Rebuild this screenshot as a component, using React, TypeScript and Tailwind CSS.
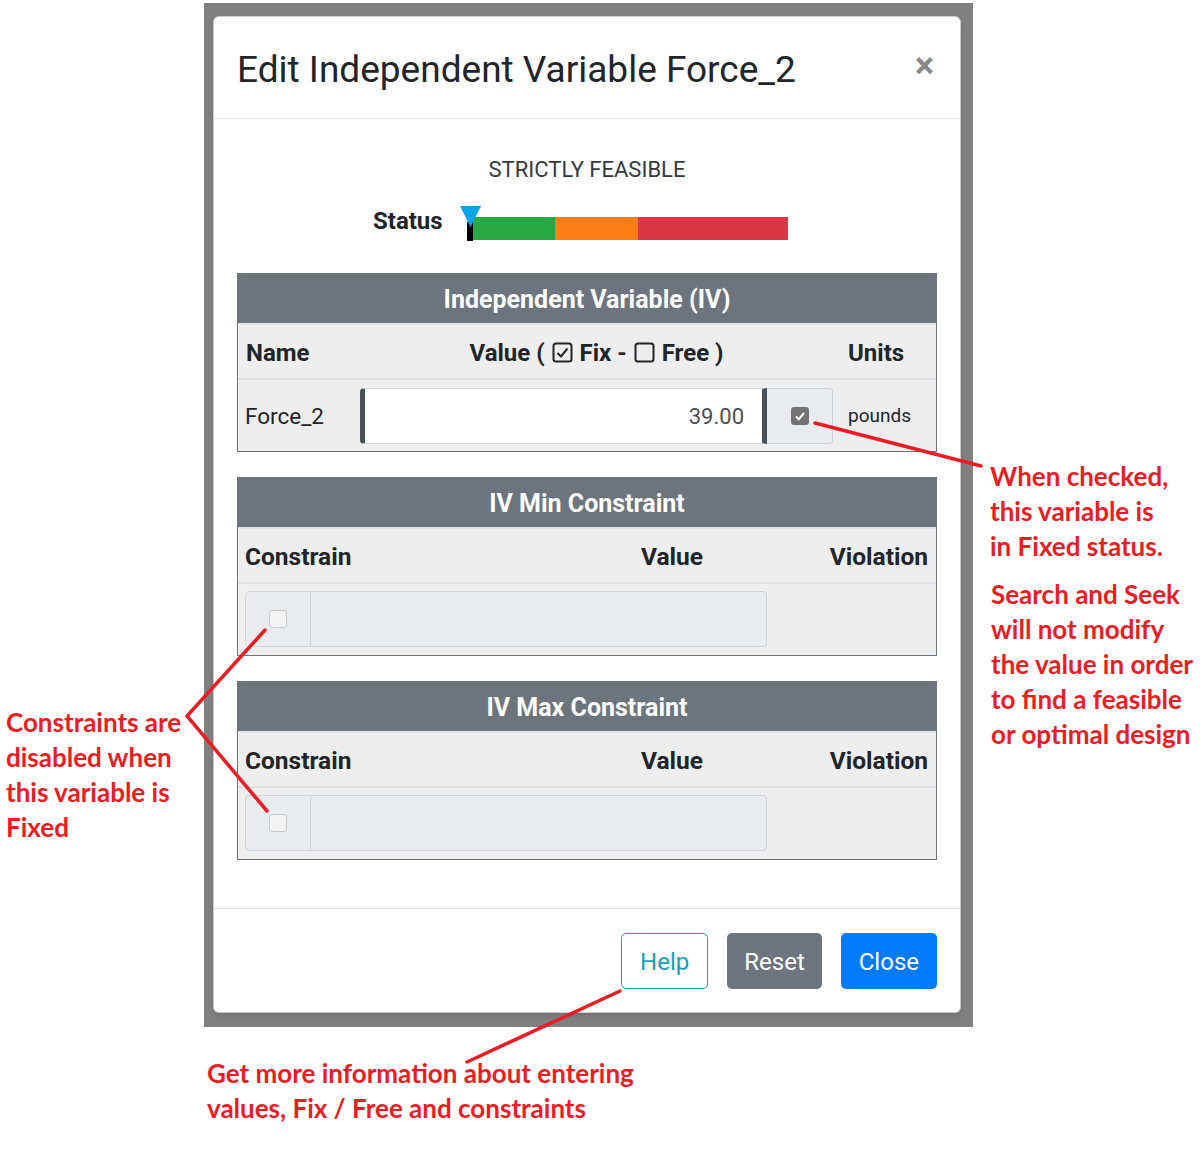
import React from "react"

const RED = "#ed1c24"

// outline box used in the "Fix / Free" column header
function HeadBox({ checked }: { checked?: boolean }) {
  return (
    <svg width="21" height="21" viewBox="0 0 21 21" className="shrink-0">
      <rect x="1.5" y="1.5" width="18" height="18" rx="2.5" fill="none" stroke="#212529" strokeWidth="2" />
      {checked && <path d="M5.5 11 L9 14.5 L15.5 6.5" fill="none" stroke="#212529" strokeWidth="2" />}
    </svg>
  )
}

function CheckedBox() {
  return (
    <div className="w-[18px] h-[18px] rounded-[3px] bg-[#737373] flex items-center justify-center">
      <svg width="12" height="12" viewBox="0 0 12 12">
        <path d="M2 6.5 L4.8 9.2 L10 3" fill="none" stroke="#ffffff" strokeWidth="2" />
      </svg>
    </div>
  )
}

function EmptyBox() {
  return <div className="w-[18px] h-[18px] rounded-[3px] bg-[#f3f3f3] border border-[#c8c8c8]" />
}

function SectionHead({ title }: { title: string }) {
  return (
    <div className="h-[50px] bg-[#6c757d] flex items-center justify-center pt-[4px] text-white text-[25px] font-bold">
      {title}
    </div>
  )
}

function IVTable() {
  return (
    <div>
      <SectionHead title="Independent Variable (IV)" />
      <div className="border-x border-b border-[#6c757d]">
        <div className="border-t-2 border-[#dee2e6] grid grid-cols-[115px_487px_1fr] h-[55px] items-center pt-[2px] bg-[#eeeeee] text-[24px] font-bold text-[#212529]">
          <div className="pl-[8px]">Name</div>
          <div className="flex items-center justify-center gap-[7px]">
            <span>Value (</span>
            <HeadBox checked />
            <span>Fix -</span>
            <HeadBox />
            <span>Free )</span>
          </div>
          <div className="pl-[8px]">Units</div>
        </div>
        <div className="border-t-2 border-[#dee2e6] grid grid-cols-[115px_487px_1fr] h-[73px] items-center bg-[#eeeeee] text-[#212529]">
          <div className="pl-[7px] pt-[3px] text-[22.5px]">Force_2</div>
          <div className="px-[7px]">
            <div className="flex h-[56px]">
              <div className="flex-1 bg-white border-y border-[#ced4da] border-l-[5px] border-l-[#495057] border-r-[5px] border-r-[#495057] rounded-l-[4px] flex items-center justify-end pr-[18px] pt-[2px] text-[22px] text-[#495057]">
                39.00
              </div>
              <div className="w-[66px] bg-[#e9ecef] border border-l-0 border-[#ced4da] rounded-r-[4px] flex items-center justify-center">
                <CheckedBox />
              </div>
            </div>
          </div>
          <div className="pl-[8px] pt-[2px] text-[19px]">pounds</div>
        </div>
      </div>
    </div>
  )
}

function ConstraintTable({ title }: { title: string }) {
  return (
    <div>
      <SectionHead title={title} />
      <div className="border-x border-b border-[#6c757d]">
        <div className="border-t-2 border-[#dee2e6] grid grid-cols-[322px_151px_1fr] h-[55px] items-center pt-[3px] bg-[#eeeeee] text-[24.5px] font-bold text-[#212529]">
          <div className="pl-[7px]">Constrain</div>
          <div className="text-right pr-[8px]">Value</div>
          <div className="text-right pr-[8px]">Violation</div>
        </div>
        <div className="border-t-2 border-[#dee2e6] h-[73px] bg-[#eeeeee] pt-[7px] pl-[7px]">
          <div className="flex h-[56px] w-[522px]">
            <div className="w-[66px] bg-[#e9ecef] border border-[#ced4da] rounded-l-[4px] flex items-center justify-center">
              <EmptyBox />
            </div>
            <div className="flex-1 bg-[#e9ecef] border border-l-0 border-[#ced4da] rounded-r-[4px]" />
          </div>
        </div>
      </div>
    </div>
  )
}

function StatusBar() {
  return (
    <div className="flex items-start ml-[136px] mt-[22px] h-[36px]">
      <div className="text-[24px] font-bold leading-[30px] text-[#212529]">Status</div>
      <div className="relative ml-[24px] w-[321px] h-[36px]">
        <div className="flex mt-[11px] h-[23px] pl-[6px]">
          <div className="w-[82px] bg-[#28a745]" />
          <div className="w-[83px] bg-[#fd7e14]" />
          <div className="w-[150px] bg-[#dc3545]" />
        </div>
        <div className="absolute left-0 top-[16px] w-[6px] h-[19px] bg-black" />
        <svg className="absolute left-[-7px] top-0" width="22" height="22" viewBox="0 0 22 22">
          <polygon points="0,0 21,0 10.5,21" fill="#0ba3ea" />
        </svg>
      </div>
    </div>
  )
}

function Modal() {
  return (
    <div className="ml-[9px] mt-[13px] w-[748px] bg-white rounded-[6px] border border-black/20 shadow-md font-['Roboto',sans-serif] text-[#212529]">
      <div className="h-[102px] border-b border-[#dee2e6] flex items-center justify-between pl-[23px] pr-[26px]">
        <div className="text-[37px] leading-[44px] pt-[4px]">Edit Independent Variable Force_2</div>
        <div className="text-[36px] font-bold text-[#888888] leading-none pb-[4px]">×</div>
      </div>
      <div className="px-[23px] pt-[37px] pb-[48px]">
        <div className="text-center text-[22px] leading-[28px] text-[#343a40]">STRICTLY FEASIBLE</div>
        <StatusBar />
        <div className="mt-[31px] flex flex-col gap-[25px]">
          <IVTable />
          <ConstraintTable title="IV Min Constraint" />
          <ConstraintTable title="IV Max Constraint" />
        </div>
      </div>
      <div className="h-[104px] border-t border-[#dee2e6] flex items-center justify-end gap-[19px] pr-[23px] text-[24px]">
        <button className="h-[56px] px-[18px] pt-[3px] rounded-[5px] border border-[#17a2b8] text-[#17a2b8] bg-white">Help</button>
        <button className="h-[56px] px-[17px] pt-[3px] rounded-[5px] bg-[#6c757d] text-white">Reset</button>
        <button className="h-[56px] px-[18px] pt-[3px] rounded-[5px] bg-[#007bff] text-white">Close</button>
      </div>
    </div>
  )
}

export default function App() {
  const note = "font-['Lato',sans-serif] font-bold text-[26px] leading-[35px] text-[#ed1c24] whitespace-nowrap"
  return (
    <div className="relative w-[1200px] h-[1150px] bg-white overflow-hidden">
      <div className="flex">
        <div className={`w-[204px] pt-[705px] pl-[6px] ${note}`}>
          Constraints are<br />disabled when<br />this variable is<br />Fixed
        </div>
        <div className="w-[769px] mt-[3px] h-[1024px] bg-[#808080] pt-0">
          <Modal />
        </div>
        <div className={`flex-1 pt-[459px] pl-[17px] ${note}`}>
          <div>When checked,<br />this variable is<br />in Fixed status.</div>
          <div className="mt-[13px] pl-[1px]">
            Search and Seek<br />will not modify<br />the value in order<br />to find a feasible<br />or optimal design
          </div>
        </div>
      </div>
      <div className={`pl-[207px] pt-[29px] ${note}`}>
        Get more information about entering<br />values, Fix / Free and constraints
      </div>

      {/* annotation arrows drawn over the screenshot */}
      <svg className="absolute inset-0 pointer-events-none" width="1200" height="1150">
        <g stroke={RED} strokeWidth="3.5" strokeLinecap="round" fill="none">
          <line x1="815" y1="423" x2="981" y2="466" />
          <polyline points="265,630 187,716 267,811" />
          <line x1="620" y1="991" x2="467" y2="1062" />
        </g>
      </svg>
    </div>
  )
}
